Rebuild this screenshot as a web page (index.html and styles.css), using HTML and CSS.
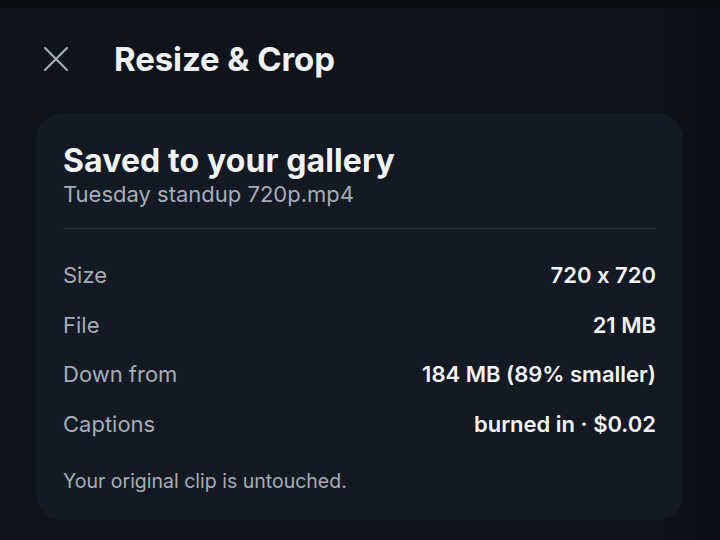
FILE: index.html
```html
<!DOCTYPE html>
<html>
<head>
<meta charset="utf-8">
<link rel="stylesheet" href="styles.css">
</head>
<body>
<div class="screen">
  <header class="topbar">
    <button class="close" aria-label="Close">
      <svg width="26" height="26" viewBox="0 0 26 26"><path d="M2 2 L24 24 M24 2 L2 24" stroke="#a7adb8" stroke-width="2.2" stroke-linecap="round" fill="none"/></svg>
    </button>
    <h1 class="title">Resize &amp; Crop</h1>
  </header>
  <section class="card">
    <h2 class="card-title">Saved to your gallery</h2>
    <div class="file-name">Tuesday standup 720p.mp4</div>
    <div class="divider"></div>
    <div class="rows">
      <div class="row"><span class="label">Size</span><span class="value">720 x 720</span></div>
      <div class="row"><span class="label">File</span><span class="value">21 MB</span></div>
      <div class="row"><span class="label">Down from</span><span class="value">184 MB (89% smaller)</span></div>
      <div class="row"><span class="label">Captions</span><span class="value">burned in · $0.02</span></div>
    </div>
    <p class="note">Your original clip is untouched.</p>
  </section>
</div>
</body>
</html>
```

FILE: styles.css
```css
* { box-sizing: border-box; }
html, body {
  margin: 0;
  padding: 0;
  width: 720px;
  height: 540px;
  overflow: hidden;
  background: #0d1118;
  font-family: Inter, "Noto Sans", sans-serif;
  font-feature-settings: "calt" 0;
}
.screen {
  width: 720px;
  height: 540px;
  background: linear-gradient(90deg, #0f131b 0%, #0f141c 85%, #0b0e14 100%);
  border-top: 8px solid #0a0d12;
}
.topbar {
  display: flex;
  align-items: center;
  height: 104px;
  padding-left: 43px;
  padding-bottom: 2px;
}
.close {
  background: none;
  border: none;
  padding: 0;
  width: 26px;
  height: 26px;
  display: flex;
  margin-right: 45px;
}
.title {
  margin: 0;
  font-size: 33px;
  font-weight: 700;
  color: #eef0f4;
  letter-spacing: -0.1px;
}
.card {
  margin: 1px 37px 0 36px;
  background: #141a24;
  border-radius: 26px;
  padding: 30px 27px 0 27px;
  height: 407px;
}
.card-title {
  margin: 0;
  font-size: 32px;
  line-height: 36px;
  font-weight: 700;
  color: #f1f3f6;
  letter-spacing: 0.1px;
}
.file-name {
  font-size: 22px;
  line-height: 26px;
  color: #a6adb9;
  margin-top: 2px;
}
.divider {
  height: 1px;
  background: #2a313c;
  margin-top: 21px;
}
.rows {
  display: flex;
  flex-direction: column;
  margin-top: 33px;
}
.row {
  display: flex;
  justify-content: space-between;
  align-items: baseline;
  height: 49.5px;
  font-size: 22px;
  line-height: 26px;
}
.label { color: #a6adb9; }
.value { color: #f1f3f6; font-weight: 600; }
.note {
  margin: 9px 0 0;
  font-size: 19.5px;
  line-height: 24px;
  color: #a6adb9;
}
```
